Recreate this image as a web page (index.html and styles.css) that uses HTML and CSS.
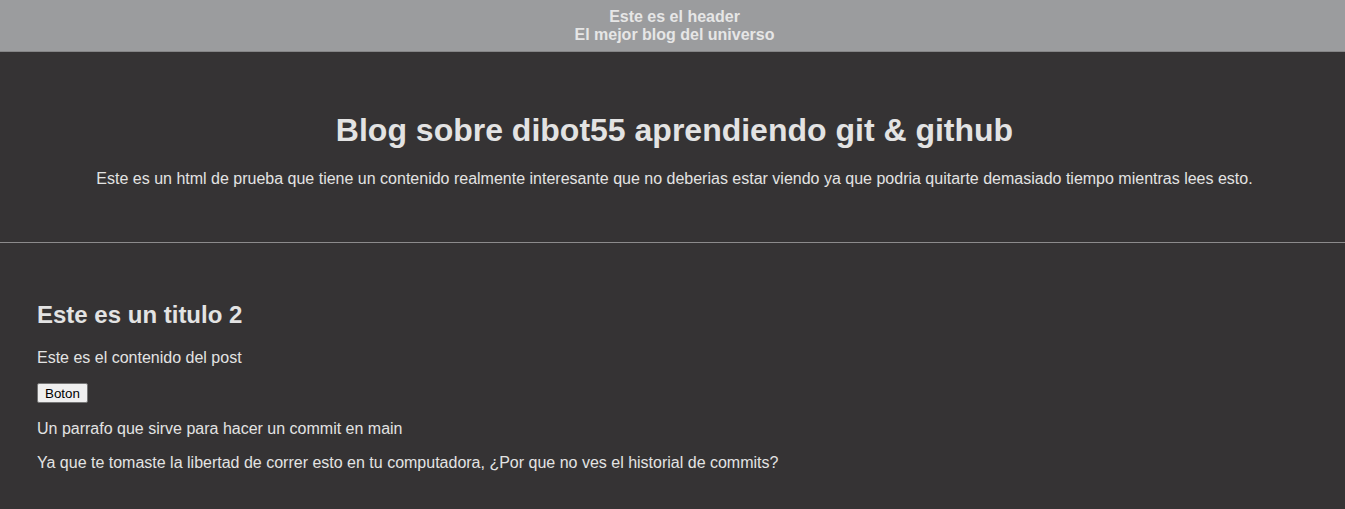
FILE: index.html
```html
<!DOCTYPE html>
<html lang="es">
<head>
<meta charset="utf-8">
<title>Blog</title>
<link rel="stylesheet" href="styles.css">
</head>
<body>
<header class="site-header">
  <div>Este es el header</div>
  <div>El mejor blog del universo</div>
</header>
<section class="hero">
  <h1>Blog sobre dibot55 aprendiendo git &amp; github</h1>
  <p>Este es un html de prueba que tiene un contenido realmente interesante que no deberias estar viendo ya que podria quitarte demasiado tiempo mientras lees esto.</p>
</section>
<hr class="divider">
<section class="post">
  <h2>Este es un titulo 2</h2>
  <p>Este es el contenido del post</p>
  <p class="btn-row"><button class="btn">Boton</button></p>
  <p>Un parrafo que sirve para hacer un commit en main</p>
  <p>Ya que te tomaste la libertad de correr esto en tu computadora, ¿Por que no ves el historial de commits?</p>
</section>
</body>
</html>
```
FILE: styles.css
```css
html, body {
  margin: 0;
  padding: 0;
}
body {
  background: #353334;
  color: #e3e3e3;
  font-family: "Liberation Sans", Arial, sans-serif;
  font-size: 16px;
}
.site-header {
  background: #9b9c9e;
  color: #e6e6e6;
  font-weight: bold;
  text-align: center;
  padding: 8px 0 7px 4px;
  line-height: 18px;
  border-bottom: 1px solid #858586;
}
.hero {
  text-align: center;
  padding: 39px 20px 38px 24px;
}
.hero h1 {
  font-size: 32px;
  margin: 21px 0;
}
.hero p {
  margin: 16px 0;
}
.divider {
  margin: 0;
  border: 0;
  border-top: 1px solid #8c8b8c;
}
.post {
  padding: 38px 37px;
}
.post h2 {
  font-size: 24px;
  margin: 20px 0;
}
.post p {
  margin: 16px 0;
}
.post .btn-row {
  margin: 16px 0 17px;
  line-height: 20px;
}
.btn {
  font-family: "Liberation Sans", Arial, sans-serif;
  font-size: 13.33px;
  line-height: 15px;
  color: #000;
  background: #efefef;
  border: 1px solid #767676;
  border-radius: 2px;
  padding: 2px 7px 1px;
  vertical-align: top;
}
```
